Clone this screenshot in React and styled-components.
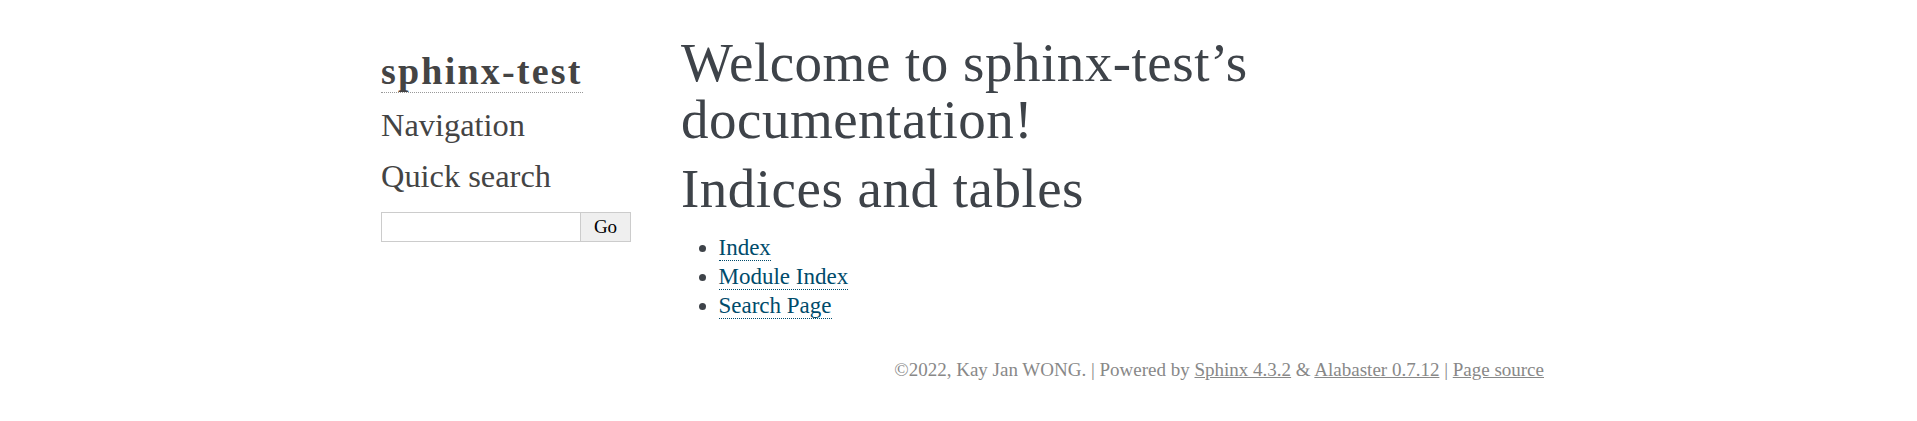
import React from 'react';
import styled, { createGlobalStyle } from 'styled-components';

const GlobalStyle = createGlobalStyle`
    html, body {
        margin: 0;
        padding: 0;
        background: #fff;
    }
    body {
        font-family: "Liberation Serif", "Times New Roman", serif;
        font-size: 23px;
        color: #000;
    }
`

const Document = styled.div`
    display: flex;
    width: 1175px;
    margin: 0 auto;
    padding-top: 35px;
    box-sizing: border-box;
`
const Sidebar = styled.div`
    flex: none;
    display: flex;
    flex-direction: column;
    align-items: flex-start;
    width: 275px;
    padding: 13.5px 12.5px 0 10px;
    box-sizing: border-box;
    color: #444;
`
const Logo = styled.h1`
    margin: 0;
    font-size: 38px;
    line-height: 44px;
    font-weight: bold;
    letter-spacing: 2.2px;
`
const LogoLink = styled.a`
    color: #444;
    text-decoration: none;
    border-bottom: 1px dotted #999;
`
const SideTitle = styled.h3`
    margin: ${props => props.top}px 0 0 0;
    font-size: 32.4px;
    line-height: 40px;
    font-weight: normal;
    color: #444;
`
const SearchForm = styled.form`
    display: flex;
    width: 250px;
    height: 30px;
    margin-top: 16.5px;
`
const SearchInput = styled.input`
    width: 200px;
    height: 30px;
    box-sizing: border-box;
    border: 1px solid #ccc;
    padding: 0 5px;
    font-family: "Liberation Serif", serif;
    font-size: 19px;
    background: #fff;
    outline: none;
`
const SearchButton = styled.button`
    width: 50px;
    height: 30px;
    box-sizing: border-box;
    border: 1px solid #ccc;
    border-left: none;
    background: #efefef;
    color: #000;
    padding: 0;
    font-family: "Liberation Serif", serif;
    font-size: 19px;
`
const Body = styled.div`
    flex: 1;
    padding: 0 37.5px 0 35px;
    color: #3E4349;
`
const Heading = styled.h1`
    margin: ${props => props.top}px 0 0 0;
    font-size: 55px;
    line-height: 56.5px;
    font-weight: normal;
    letter-spacing: 0.5px;
`
const List = styled.ul`
    margin: 15.3px 0 0 37.5px;
    padding: 0;
    line-height: 29px;
`
const Link = styled.a`
    color: #004B6B;
    text-decoration: none;
    border-bottom: 1px dotted #004B6B;
`
const Footer = styled.div`
    width: 1175px;
    margin: 38px auto 0 auto;
    padding-right: 2px;
    box-sizing: border-box;
    text-align: right;
    font-size: 19px;
    line-height: 24px;
    color: #888;
`
const FooterLink = styled.a`
    color: #888;
    text-decoration: underline;
`

export default function App() {
    return (
        <>
            <GlobalStyle />
            <Document>
                <Sidebar>
                    <Logo><LogoLink href="#">sphinx-test</LogoLink></Logo>
                    <SideTitle top={12.6}>Navigation</SideTitle>
                    <SideTitle top={10.7}>Quick search</SideTitle>
                    <SearchForm onSubmit={e => e.preventDefault()}>
                        <SearchInput type="text" aria-label="search" />
                        <SearchButton type="submit">Go</SearchButton>
                    </SearchForm>
                </Sidebar>
                <Body>
                    <Heading top={0}>Welcome to sphinx-test’s documentation!</Heading>
                    <Heading top={12.9}>Indices and tables</Heading>
                    <List>
                        <li><Link href="#">Index</Link></li>
                        <li><Link href="#">Module Index</Link></li>
                        <li><Link href="#">Search Page</Link></li>
                    </List>
                </Body>
            </Document>
            <Footer>
                ©2022, Kay Jan WONG.
                | Powered by <FooterLink href="#">Sphinx 4.3.2</FooterLink>
                {' '}&amp; <FooterLink href="#">Alabaster 0.7.12</FooterLink>
                {' '}| <FooterLink href="#">Page source</FooterLink>
            </Footer>
        </>
    );
}
